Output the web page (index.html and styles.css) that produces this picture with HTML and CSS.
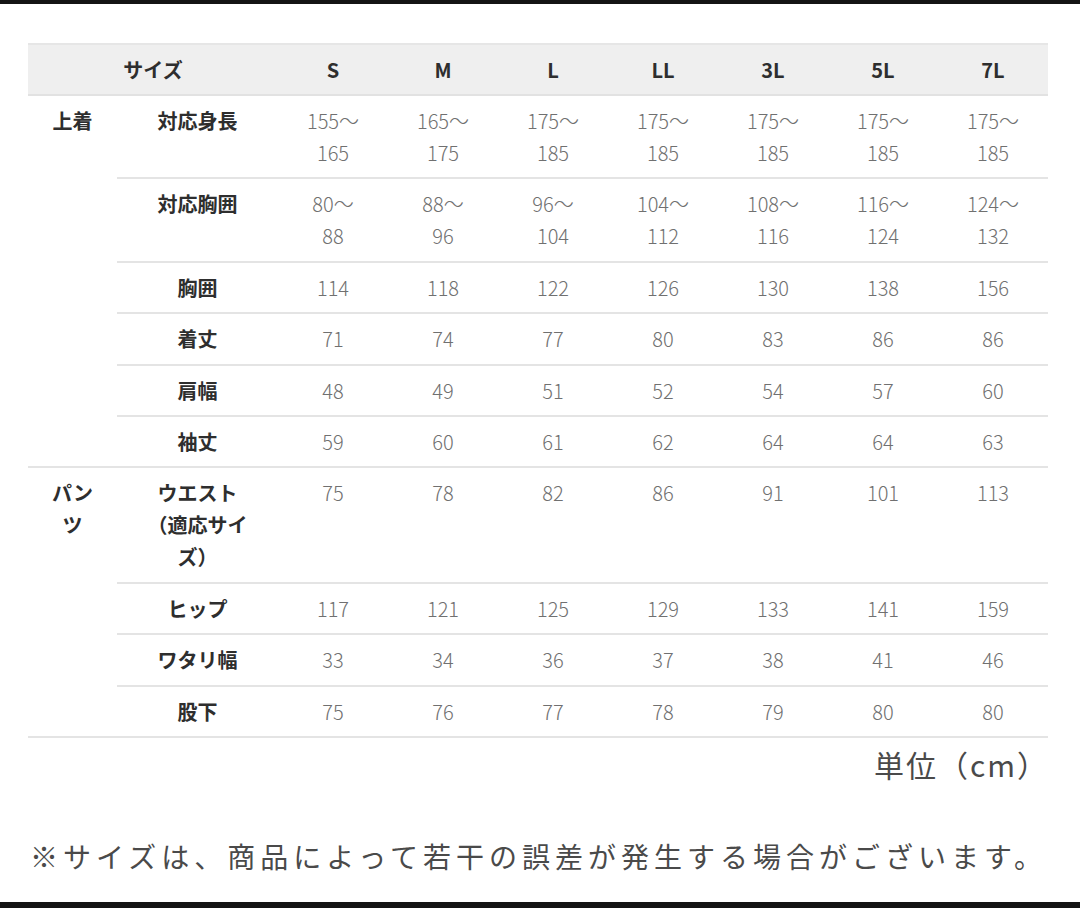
FILE: index.html
```html
<!DOCTYPE html>
<html lang="ja">
<head>
<meta charset="utf-8">
<title>サイズ表</title>
<link rel="stylesheet" href="styles.css">
</head>
<body>
<div class="page">
  <div class="bar"></div>
  <main class="content">
    <table class="size-table">
      <colgroup>
        <col class="c-group"><col class="c-item">
        <col class="c-val"><col class="c-val"><col class="c-val"><col class="c-val"><col class="c-val"><col class="c-val"><col class="c-val">
      </colgroup>
      <thead>
        <tr>
          <th colspan="2">サイズ</th>
          <th>S</th><th>M</th><th>L</th><th>LL</th><th>3L</th><th>5L</th><th>7L</th>
        </tr>
      </thead>
      <tbody>
        <tr>
          <td class="group" rowspan="6">上着</td>
          <td class="item">対応身長</td>
          <td>155〜<br>165</td><td>165〜<br>175</td><td>175〜<br>185</td><td>175〜<br>185</td><td>175〜<br>185</td><td>175〜<br>185</td><td>175〜<br>185</td>
        </tr>
        <tr>
          <td class="item">対応胸囲</td>
          <td>80〜<br>88</td><td>88〜<br>96</td><td>96〜<br>104</td><td>104〜<br>112</td><td>108〜<br>116</td><td>116〜<br>124</td><td>124〜<br>132</td>
        </tr>
        <tr>
          <td class="item">胸囲</td>
          <td>114</td><td>118</td><td>122</td><td>126</td><td>130</td><td>138</td><td>156</td>
        </tr>
        <tr>
          <td class="item">着丈</td>
          <td>71</td><td>74</td><td>77</td><td>80</td><td>83</td><td>86</td><td>86</td>
        </tr>
        <tr>
          <td class="item">肩幅</td>
          <td>48</td><td>49</td><td>51</td><td>52</td><td>54</td><td>57</td><td>60</td>
        </tr>
        <tr>
          <td class="item">袖丈</td>
          <td>59</td><td>60</td><td>61</td><td>62</td><td>64</td><td>64</td><td>63</td>
        </tr>
        <tr>
          <td class="group" rowspan="4">パンツ</td>
          <td class="item">ウエスト（適応サイズ）</td>
          <td>75</td><td>78</td><td>82</td><td>86</td><td>91</td><td>101</td><td>113</td>
        </tr>
        <tr>
          <td class="item">ヒップ</td>
          <td>117</td><td>121</td><td>125</td><td>129</td><td>133</td><td>141</td><td>159</td>
        </tr>
        <tr>
          <td class="item">ワタリ幅</td>
          <td>33</td><td>34</td><td>36</td><td>37</td><td>38</td><td>41</td><td>46</td>
        </tr>
        <tr>
          <td class="item">股下</td>
          <td>75</td><td>76</td><td>77</td><td>78</td><td>79</td><td>80</td><td>80</td>
        </tr>
      </tbody>
    </table>
    <p class="unit">単位（cm）</p>
    <p class="note">※サイズは、商品によって若干の誤差が発生する場合がございます。</p>
  </main>
  <div class="bar bar-bottom"></div>
</div>
</body>
</html>
```

FILE: styles.css
```css
html, body {
  margin: 0;
  padding: 0;
  background: #ffffff;
}

body {
  font-family: "Noto Sans CJK JP", "Noto Sans", sans-serif;
  color: #333333;
}

.page {
  width: 1080px;
  height: 908px;
  display: flex;
  flex-direction: column;
  overflow: hidden;
}

.bar {
  height: 4px;
  background: #141414;
  flex: none;
}

.bar-bottom {
  height: 6px;
  margin-top: auto;
}

.content {
  padding: 39px 0 0 28px;
}

.size-table {
  width: 1020px;
  table-layout: fixed;
  border-collapse: collapse;
  font-size: 20px;
  line-height: 32px;
}

.c-group { width: 89px; }
.c-item { width: 161px; }
.c-val { width: 110px; }

.size-table th {
  background: #efefef;
  border-top: 2px solid #e6e6e6;
  border-bottom: 2px solid #e2e2e2;
  padding: 9px 0 8px;
  font-weight: 700;
  color: #2e2e2e;
  text-align: center;
}

.size-table td {
  padding: 9px 0 8.4px;
  border-bottom: 2px solid #e4e4e4;
  text-align: center;
  vertical-align: top;
  color: #707070;
  font-weight: 300;
}

.size-table td.group {
  padding: 9px 20px 8.4px;
  font-weight: 700;
  color: #2e2e2e;
}

.size-table td.item {
  padding: 9px 26px 8.4px;
  font-weight: 700;
  color: #2e2e2e;
}

.unit {
  margin: 6px 0 0;
  width: 1021px;
  text-align: right;
  font-size: 30px;
  line-height: 40px;
  color: #4a4a4a;
  letter-spacing: 2px;
}

.note {
  margin: 52px 0 0 2px;
  font-size: 28px;
  line-height: 40px;
  color: #4a4a4a;
  letter-spacing: 5px;
  white-space: nowrap;
}
```
